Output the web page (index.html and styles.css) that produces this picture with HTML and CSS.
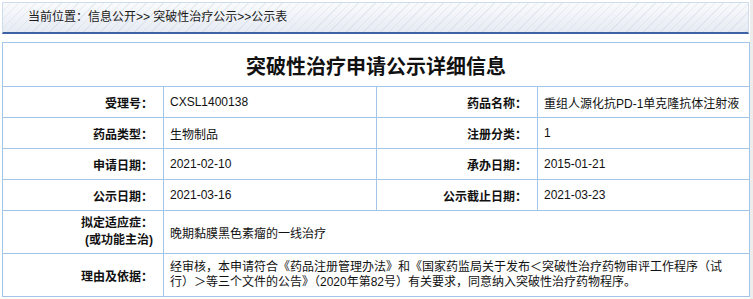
FILE: index.html
```html
<!DOCTYPE html>
<html lang="zh-CN">
<head>
<meta charset="utf-8">
<title>突破性治疗申请公示详细信息</title>
<link rel="stylesheet" href="styles.css">
</head>
<body>
<div class="page">
  <div class="crumb">当前位置：信息公开&gt;&gt; 突破性治疗公示&gt;&gt;公示表</div>
  <table class="detail">
    <colgroup>
      <col class="c1"><col class="c2"><col class="c3"><col class="c4">
    </colgroup>
    <tr class="title-row"><th colspan="4">突破性治疗申请公示详细信息</th></tr>
    <tr class="row"><th>受理号：</th><td>CXSL1400138</td><th>药品名称：</th><td>重组人源化抗PD-1单克隆抗体注射液</td></tr>
    <tr class="row"><th>药品类型：</th><td>生物制品</td><th>注册分类：</th><td>1</td></tr>
    <tr class="row"><th>申请日期：</th><td>2021-02-10</td><th>承办日期：</th><td>2015-01-21</td></tr>
    <tr class="row"><th>公示日期：</th><td>2021-03-16</td><th>公示截止日期：</th><td>2021-03-23</td></tr>
    <tr class="row tall"><th class="two">拟定适应症：<br>(或功能主治)</th><td colspan="3">晚期黏膜黑色素瘤的一线治疗</td></tr>
    <tr class="row tall"><th>理由及依据：</th><td colspan="3" class="reason">经审核，本申请符合《药品注册管理办法》和《国家药监局关于发布＜突破性治疗药物审评工作程序（试行）＞等三个文件的公告》（2020年第82号）有关要求，同意纳入突破性治疗药物程序。</td></tr>
  </table>
</div>
</body>
</html>
```
FILE: styles.css
```css
html {
  background: linear-gradient(to right, #ffffff 0, #ffffff 750px, #ececec 750px);
  min-height: 100%;
}
body {
  margin: 0;
  font-family: "Liberation Sans", "Noto Sans CJK SC", sans-serif;
  font-size: 12px;
  color: #111;
}
.page {
  padding: 2px 0 0 2px;
  width: 747px;
}
.crumb {
  box-sizing: border-box;
  width: 747px;
  height: 32px;
  line-height: 29px;
  padding-left: 25px;
  border: 1px solid #cfdcea;
  border-bottom: 2px solid #3d63a6;
  background:
    repeating-linear-gradient(135deg, rgba(255,255,255,0) 0, rgba(255,255,255,0) 5px, rgba(200,210,225,0.35) 5px, rgba(200,210,225,0.35) 6px),
    linear-gradient(to bottom, #f9fafc 0%, #e6ebf3 100%);
  color: #1a1a1a;
}
.detail {
  margin-top: 8px;
  width: 747px;
  table-layout: fixed;
  border-collapse: collapse;
  border: 1px solid #a3c6e8;
}
.c1 { width: 161px; }
.c2 { width: 213px; }
.c3 { width: 161px; }
.c4 { width: 212px; }
.detail th, .detail td {
  border: 1px solid #a3c6e8;
  padding: 0 6px;
  font-size: 12px;
  vertical-align: middle;
}
.detail th {
  text-align: right;
  font-weight: bold;
  padding-right: 10px;
  color: #111;
}
.detail td {
  text-align: left;
  color: #111;
}
.title-row th {
  height: 41px;
  text-align: center;
  font-size: 20px;
  padding: 2px 0 0 0;
}
.row th, .row td {
  height: 30px;
}
.tall th, .tall td {
  height: 42px;
}
.two {
  line-height: 17px;
}
.detail .reason {
  line-height: 15px;
  padding-right: 13px;
}
```
